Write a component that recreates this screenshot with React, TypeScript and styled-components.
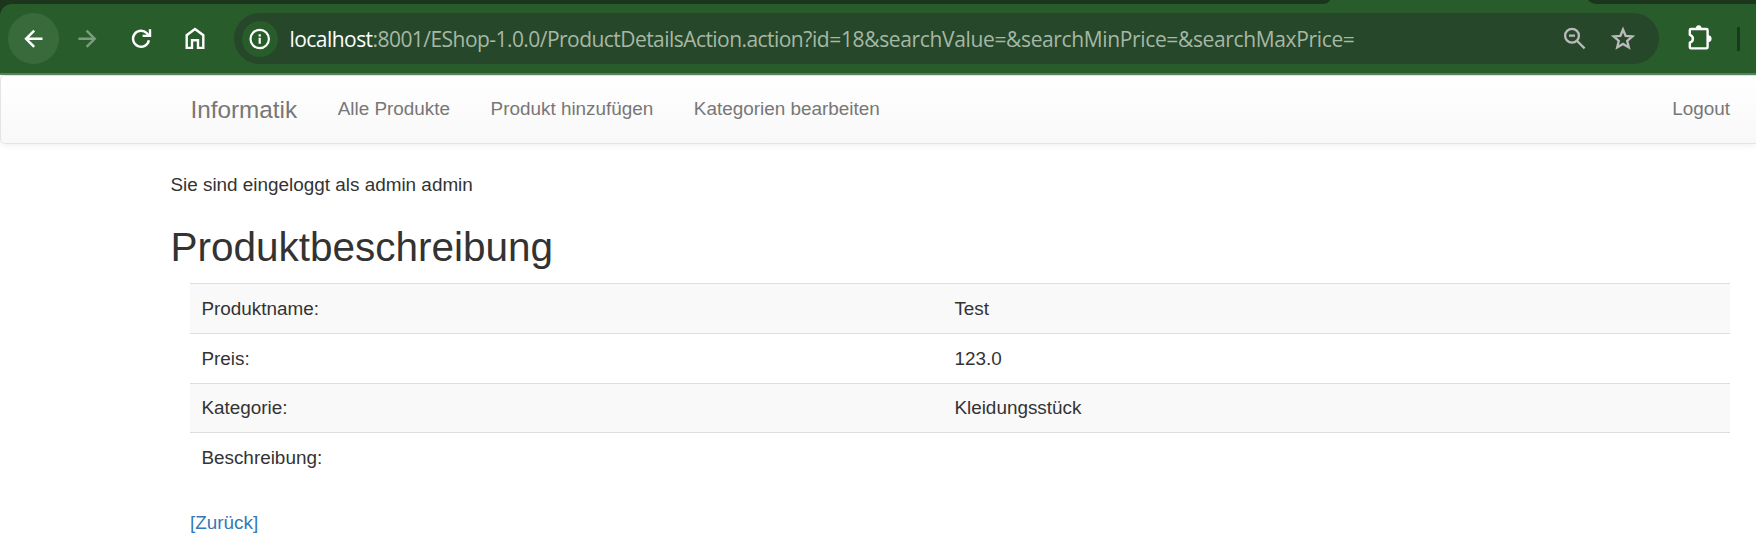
import React from "react";
import styled, { createGlobalStyle } from "styled-components";

const GlobalStyle = createGlobalStyle`
  * { box-sizing: border-box; }
  html, body { margin: 0; padding: 0; background: #fff; }
  body {
    width: 1756px;
    height: 549px;
    overflow: hidden;
    color: #333;
    font: 18.9px/27px "Liberation Sans", Arial, sans-serif;
  }
`;

const TabStrip = styled.div`
  height: 14px;
  margin-bottom: -10px;
  background: linear-gradient(#1b361c 4px, #285c2a 4px);
`;

const ActiveTab = styled.svg`
  display: block;
  width: 275px;
  height: 4px;
  margin-left: 1323px;
`;

const ToolbarBacking = styled.div`
  background: #1b361c;
`;

const Toolbar = styled.div`
  position: relative;
  display: flex;
  align-items: center;
  height: 71px;
  padding: 0 16px 0 8px;
  background: #285c2a;
  border-bottom: 2px solid #55805a;
  border-top-left-radius: 12px;
`;

const ToolButton = styled.span<{ $gap?: number; $active?: boolean; $dim?: boolean }>`
  display: flex;
  flex: none;
  align-items: center;
  justify-content: center;
  width: 51px;
  height: 51px;
  margin-right: ${(p) => p.$gap ?? 3}px;
  border-radius: 50%;
  background: ${(p) => (p.$active ? "#396a3b" : "transparent")};
  color: ${(p) => (p.$dim ? "#7c9c7d" : "#fff")};
`;

const AddressBar = styled.div`
  display: flex;
  flex: none;
  align-items: center;
  width: 1425px;
  height: 51px;
  margin-right: 15px;
  padding: 0 22px 0 8px;
  border-radius: 26px;
  background: #26472a;
  color: #b9bab9;
`;

const SiteInfo = styled.span`
  display: flex;
  align-items: center;
  justify-content: center;
  width: 36px;
  height: 36px;
  margin-right: 11.5px;
  border-radius: 50%;
  background: #285c2a;
  color: #fff;
`;

const Url = styled.span`
  flex: 1;
  white-space: nowrap;
  color: #a6b8a5;
  font: 21px/30px "Open Sans", "Noto Sans", sans-serif;
  letter-spacing: -0.55px;
`;

const Host = styled.span`
  color: #fff;
`;

const Query = styled.span`
  letter-spacing: -0.36px;
`;

const Icon = styled.svg<{ $gap?: number }>`
  display: block;
  flex: none;
  margin-right: ${(p) => p.$gap ?? 0}px;
  overflow: visible;
`;

const Separator = styled.span`
  width: 3px;
  height: 24px;
  margin-left: 12px;
  background: #1b3a1d;
`;

const Navbar = styled.nav`
  display: flex;
  align-items: center;
  height: 69px;
  padding: 0 26px 0 189.5px;
  border: 1px solid #e4e4e4;
  border-right: 0;
  border-radius: 5px 0 0 5px;
  background: linear-gradient(#fff, #f8f8f8);
  box-shadow: 0 1px 7px rgba(0, 0, 0, 0.075);
  color: #777;
`;

const Brand = styled.span`
  margin-right: 40.5px;
  font-size: 24.3px;
`;

const NavLink = styled.span<{ $end?: boolean }>`
  margin-left: ${(p) => (p.$end ? "auto" : "0")};
  margin-right: ${(p) => (p.$end ? "0" : "40.5px")};
  padding-bottom: 2px;
`;

const Content = styled.main`
  padding: 27px 26px 0 170.4px;
`;

const LoginNote = styled.p`
  margin: 0;
`;

const Title = styled.h2`
  margin: 27px 0 13px;
  font-size: 40.5px;
  font-weight: 400;
  line-height: 45px;
`;

const Details = styled.div`
  margin-left: 19.6px;
`;

const Row = styled.div<{ $striped?: boolean; $height: number }>`
  display: grid;
  grid-template-columns: 753px 1fr;
  align-items: start;
  height: ${(p) => p.$height}px;
  padding: ${(p) => (p.$height === 49 ? 10 : 11)}px 11px 0 11.4px;
  border-top: 1px solid #ddd;
  background: ${(p) => (p.$striped ? "#f9f9f9" : "#fff")};
`;

const BackLink = styled.a`
  color: #337ab7;
`;

const rows = [
  { label: "Produktname:", value: "Test", height: 50 },
  { label: "Preis:", value: "123.0", height: 50 },
  { label: "Kategorie:", value: "Kleidungsstück", height: 49 },
  { label: "Beschreibung:", value: "", height: 77 },
];

export default function App() {
  return (
    <>
      <GlobalStyle />
      <TabStrip>
        <ActiveTab viewBox="0 0 275 4">
          <path d="M0 4Q5 4 7 0H265Q268 4 275 4Z" fill="#285c2a" />
        </ActiveTab>
      </TabStrip>
      <ToolbarBacking>
        <Toolbar>
          <ToolButton $active>
            <Icon width="27" height="27" viewBox="0 0 24 24">
              <path d="M20 12.3H5.4M12.6 5.1 5.4 12.3l7.2 7.2" fill="none" stroke="currentColor" strokeWidth="2.2" />
            </Icon>
          </ToolButton>
          <ToolButton $dim>
            <Icon width="27" height="27" viewBox="0 0 24 24">
              <path d="M4 12.3h14.4M11.2 5.1l7.2 7.2-7.2 7.2" fill="none" stroke="currentColor" strokeWidth="2.2" />
            </Icon>
          </ToolButton>
          <ToolButton>
            <Icon width="27" height="27" viewBox="0 0 27 27" fill="none" stroke="currentColor" strokeWidth="2.4">
              <path d="M20.9 15.3A8 8 0 1 1 18.8 8.2L21 10.8M22 4.2V10.9H14.6" />
            </Icon>
          </ToolButton>
          <ToolButton $gap={13}>
            <Icon width="27" height="27" viewBox="0 0 27 27" fill="none" stroke="currentColor" strokeWidth="2.4">
              <path d="M4.7 22.9V10.2L13 4 21.3 10.2V22.9H16V15.3H10V22.9Z" />
            </Icon>
          </ToolButton>
          <AddressBar>
            <SiteInfo>
              <Icon width="22" height="22" viewBox="0 0 22 22">
                <circle cx="10.7" cy="11" r="9.2" fill="none" stroke="currentColor" strokeWidth="2.2" />
                <path d="M10.7 9.8v6M10.7 6.2v2.2" stroke="currentColor" strokeWidth="2.2" />
              </Icon>
            </SiteInfo>
            <Url>
              <Host>localhost</Host>
              :8001/EShop-1.0.0/ProductDetailsAction.action
              <Query>?id=18&amp;searchValue=&amp;searchMinPrice=&amp;searchMaxPrice=</Query>
            </Url>
            <Icon $gap={22} width="27" height="27" viewBox="0 0 27 27" fill="none" stroke="currentColor" strokeWidth="2.3">
              <circle cx="11" cy="10.8" r="6.9" />
              <path d="M15.9 15.7l7.7 7.7M8 10.6h6" />
            </Icon>
            <Icon width="27" height="27" viewBox="0 0 27 27">
              <path
                d="M13 4.5l2.6 6.3 6.8.6-5.2 4.4 1.6 6.6-5.8-3.5-5.8 3.5 1.6-6.6-5.2-4.4 6.8-.6z"
                fill="none"
                stroke="currentColor"
                strokeWidth="2.3"
              />
            </Icon>
          </AddressBar>
          <ToolButton $gap={0}>
            <Icon width="27" height="27" viewBox="0 0 27 27">
              <path
                d="M5 4H20.4Q21.6 4 21.6 5.2V22.2Q21.6 23.4 20.4 23.4H5Q3.8 23.4 3.8 22.2V17.6Q6.9 16.6 6.9 13.7T3.8 9.8V5.2Q3.8 4 5 4Z"
                fill="none"
                stroke="currentColor"
                strokeWidth="2.4"
                strokeLinejoin="round"
              />
              <path d="M9.7 4A3 3.8 0 0 1 15.7 4ZM21.6 10.3A4 3.4 0 0 1 21.6 17.1Z" fill="currentColor" />
            </Icon>
          </ToolButton>
          <Separator />
        </Toolbar>
      </ToolbarBacking>
      <Navbar>
        <Brand>Informatik</Brand>
        <NavLink>Alle Produkte</NavLink>
        <NavLink>Produkt hinzufügen</NavLink>
        <NavLink>Kategorien bearbeiten</NavLink>
        <NavLink $end>Logout</NavLink>
      </Navbar>
      <Content>
        <LoginNote>Sie sind eingeloggt als admin admin</LoginNote>
        <Title>Produktbeschreibung</Title>
        <Details>
          {rows.map((row, i) => (
            <Row key={row.label} $striped={i % 2 === 0} $height={row.height}>
              <span>{row.label}</span>
              <span>{row.value}</span>
            </Row>
          ))}
          <BackLink>[Zurück]</BackLink>
        </Details>
      </Content>
    </>
  );
}
